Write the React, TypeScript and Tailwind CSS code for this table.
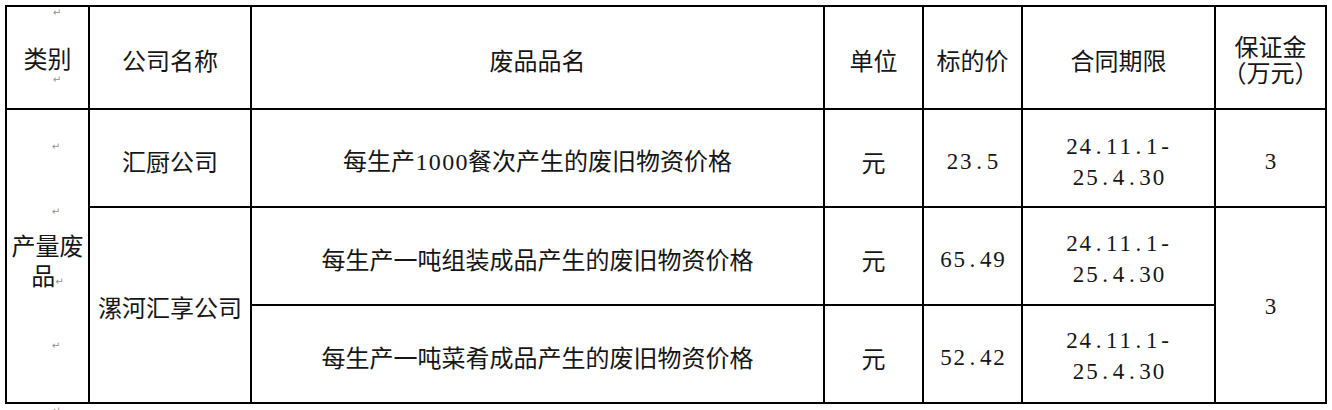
import React from "react";

const Mono = ({ t, size = "text-[23px]" }: { t: string; size?: string }) => (
  <span className={`inline-flex font-['Liberation_Serif',serif] ${size}`}>
    {t.split("").map((c, i) => (
      <span key={i} className="inline-block w-[13.3px] text-center">
        {c}
      </span>
    ))}
  </span>
);

const Mark = ({ className = "" }: { className?: string }) => (
  <span
    className={`font-['DejaVu_Sans',sans-serif] text-[10px] leading-[12px] text-[#8f8f8f] ${className}`}
  >
    ↵
  </span>
);

const cjk = "font-['Noto_Sans_CJK_SC','Noto_Sans_CJK_JP',sans-serif]";

const Cell = ({
  className = "",
  children,
}: {
  className?: string;
  children: React.ReactNode;
}) => (
  <div
    className={`flex items-center justify-center bg-white text-center text-[24px] leading-[24px] text-[#161616] ${cjk} ${className}`}
  >
    {children}
  </div>
);

const Dates = () => (
  <div className="flex flex-col items-center leading-[31px]">
    <Mono t="24.11.1-" />
    <Mono t="25.4.30" />
  </div>
);

export default function App() {
  return (
    <div className="min-h-[410px] bg-white pl-[5px] pt-[5px]">
      <div className="grid w-[1322px] grid-cols-[81px_160px_571px_97px_97px_191px_109px] grid-rows-[101px_96px_96px_96px] gap-[2px] border-2 border-black bg-black">
        {/* header */}
        <div
          className={`col-start-1 row-start-1 flex flex-col items-center bg-white text-[24px] text-[#161616] ${cjk}`}
        >
          <Mark className="ml-[19px]" />
          <span className="mt-[27px] leading-[24px]">类别</span>
          <Mark className="ml-[19px] mt-[4px]" />
        </div>
        <Cell className="col-start-2 row-start-1 pt-[4px]">公司名称</Cell>
        <Cell className="col-start-3 row-start-1 pt-[4px]">废品品名</Cell>
        <Cell className="col-start-4 row-start-1 pt-[4px]">单位</Cell>
        <Cell className="col-start-5 row-start-1 pt-[4px]">标的价</Cell>
        <Cell className="col-start-6 row-start-1 pt-[4px]">合同期限</Cell>
        <Cell className="col-start-7 row-start-1 pt-[3px]">
          <div className="flex flex-col items-center leading-[26px]">
            <span>保证金</span>
            <span>（万元）</span>
          </div>
        </Cell>

        {/* category column */}
        <div
          className={`col-start-1 row-start-2 row-span-3 flex flex-col items-center bg-white text-center text-[24px] text-[#161616] ${cjk}`}
        >
          <Mark className="ml-[17px] mt-[31px]" />
          <Mark className="ml-[17px] mt-[53px]" />
          <span className="mt-[12px] leading-[30px]">
            产量废品
            <Mark />
          </span>
          <Mark className="ml-[17px] mt-[50px]" />
        </div>

        {/* company column */}
        <Cell className="col-start-2 row-start-2 pt-[6px]">汇厨公司</Cell>
        <Cell className="col-start-2 row-start-3 row-span-2 pt-[4px]">
          漯河汇享公司
        </Cell>

        {/* row 2 */}
        <Cell className="col-start-3 row-start-2 pt-[6px]">
          <span>
            每生产
            <Mono t="1000" size="text-[24px]" />
            餐次产生的废旧物资价格
          </span>
        </Cell>
        <Cell className="col-start-4 row-start-2 pt-[8px]">元</Cell>
        <Cell className="col-start-5 row-start-2 pt-[7px]">
          <Mono t="23.5" />
        </Cell>
        <Cell className="col-start-6 row-start-2 pt-[7px]">
          <Dates />
        </Cell>
        <Cell className="col-start-7 row-start-2 pt-[7px]">
          <Mono t="3" />
        </Cell>

        {/* row 3 */}
        <Cell className="col-start-3 row-start-3 pt-[6px]">
          每生产一吨组装成品产生的废旧物资价格
        </Cell>
        <Cell className="col-start-4 row-start-3 pt-[8px]">元</Cell>
        <Cell className="col-start-5 row-start-3 pt-[7px]">
          <Mono t="65.49" />
        </Cell>
        <Cell className="col-start-6 row-start-3 pt-[6px]">
          <Dates />
        </Cell>

        {/* merged deposit */}
        <Cell className="col-start-7 row-start-3 row-span-2 pt-[4px]">
          <Mono t="3" />
        </Cell>

        {/* row 4 */}
        <Cell className="col-start-3 row-start-4 pt-[6px]">
          每生产一吨菜肴成品产生的废旧物资价格
        </Cell>
        <Cell className="col-start-4 row-start-4 pt-[8px]">元</Cell>
        <Cell className="col-start-5 row-start-4 pt-[7px]">
          <Mono t="52.42" />
        </Cell>
        <Cell className="col-start-6 row-start-4 pt-[4px]">
          <Dates />
        </Cell>
      </div>
      <div className="flex w-[81px] justify-center pt-[1px]">
        <Mark className="ml-[22px]" />
      </div>
    </div>
  );
}
